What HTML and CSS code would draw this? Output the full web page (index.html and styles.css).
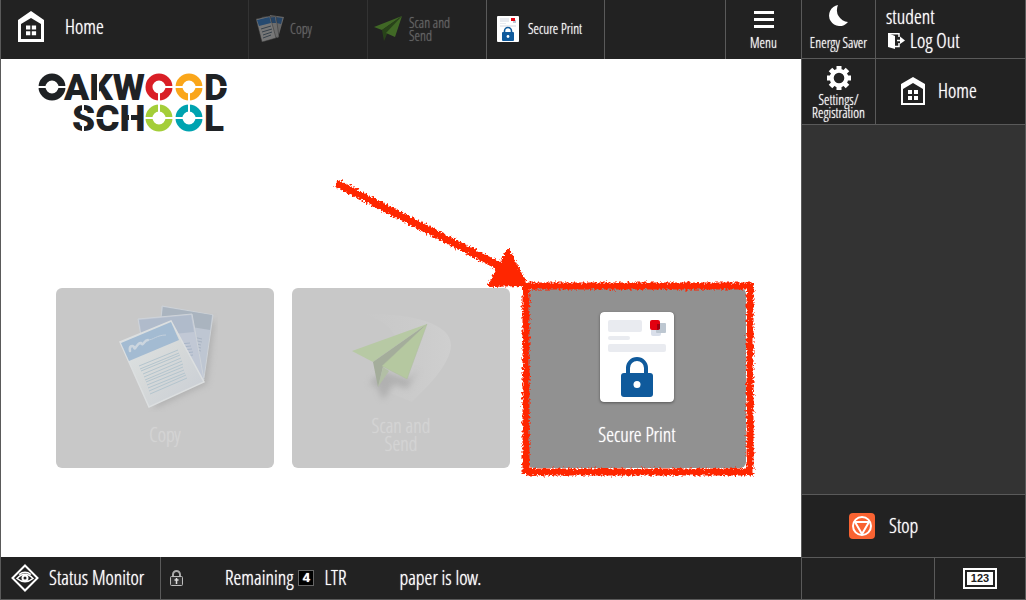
FILE: index.html
```html
<!DOCTYPE html>
<html lang="en">
<head>
    <meta charset="UTF-8">
    <meta name="viewport" content="width=device-width, initial-scale=1.0">
    <title>Home - Secure Print</title>
    <link rel="stylesheet" href="styles.css">
</head>
<body>
    <svg class="defs" width="0" height="0" aria-hidden="true">
        <symbol id="icon-home" viewBox="0 0 26 31">
            <path fill="#fff" fill-rule="evenodd" d="M13 0L26 9V31H0V9ZM13 7L3 13V28H23V13Z"/>
            <path fill="#fff" d="M8 14.500h4.300v4H8zM13.800 14.500h4.300v4h-4.300zM8 20.200h4.300v4H8zM13.800 20.200h4.300v4h-4.300z"/>
        </symbol>
    </svg>

    <div class="panel">
        <div class="screen">
            <header class="topbar">
                <button class="tab tab-home" type="button">
                    <svg width="26" height="31"><use href="#icon-home"/></svg>
                    <span>Home</span>
                </button>
                <button class="tab tab-copy" type="button" disabled>
                    <svg width="28" height="27" viewBox="0 0 28 27">
                        <path fill="#aaa" d="M14 0L28 2L22 23L12 20Z"/>
                        <path fill="#2a66a8" d="M16 1.500L26.500 3L25 9L16 7Z"/>
                        <path fill="#b8b8b8" stroke="#444" stroke-width=".5" d="M6 2L20 1L23 22L10 24Z"/>
                        <path fill="#2a66a8" d="M8 3L19 2L20 8L9 8Z"/>
                        <path fill="#ccc" stroke="#444" stroke-width=".5" d="M0 4L14 1L20 23L6 27Z"/>
                        <path fill="#2a72bd" d="M1 5L13.500 2L15 8L3 11Z"/>
                        <path stroke="#4b6175" d="M5 14l10-3M6 17l10-3M7 20l9-3M7 23l8-3"/>
                    </svg>
                    <span>Copy</span>
                </button>
                <button class="tab tab-scan" type="button" disabled>
                    <svg width="28" height="25" viewBox="0 0 28 25">
                        <path fill="#5fae29" d="M28 0L0 11L8 14Z"/>
                        <path fill="#2f6412" d="M28 0L8 14L10 25L13 18Z"/>
                        <path fill="#60b02b" d="M28 0L12 17L21 21Z"/>
                    </svg>
                    <span>Scan and<br>Send</span>
                </button>
                <button class="tab tab-secure" type="button">
                    <svg width="22" height="26" viewBox="0 0 22 26">
                        <rect width="22" height="26" rx="1" fill="#fff"/>
                        <path fill="#e9ebf0" d="M3 2h9v4H3zM3 7h6v1H3zM3 9h16v2H3z"/>
                        <path fill="#bcc5d2" d="M16 4h3v3h-3z"/>
                        <path fill="#e2000f" d="M14 2h4v3h-4z"/>
                        <path fill="none" stroke="#0f5a9c" stroke-width="1.600" d="M7.500 17v-2a3.500 3.500 0 0 1 7 0v2"/>
                        <rect x="5" y="16" width="12" height="9" rx="1" fill="#0f5a9c"/>
                        <circle cx="11" cy="20.500" r="1.400" fill="#fff"/>
                    </svg>
                    <span>Secure Print</span>
                </button>
                <div class="tab-space"></div>
                <button class="tab-menu" type="button">
                    <svg width="20" height="17" viewBox="0 0 20 17"><path fill="#fff" d="M0 0h20v3H0zM0 7h20v3H0zM0 14h20v3H0z"/></svg>
                    <span>Menu</span>
                </button>
            </header>

            <main class="content">
                <svg class="logo" width="192" height="58" viewBox="0 0 192 58" role="img" aria-label="Oakwood School">
                    <g class="logo-text">
                        <text y="27" x="26">AKW</text>
                        <text y="27" x="166">D</text>
                        <text y="58" x="34">SCH</text>
                        <text y="58" x="166">L</text>
                    </g>
                    <g fill="none" stroke-width="7">
                        <circle cx="14" cy="14" r="10" stroke="#1f2225"/>
                        <circle cx="121" cy="14" r="10" stroke="#d91f26"/>
                        <circle cx="151" cy="14" r="10" stroke="#faa61a"/>
                        <circle cx="121" cy="45" r="10" stroke="#a4ce39"/>
                        <circle cx="151" cy="45" r="10" stroke="#00a3b0"/>
                    </g>
                    <path class="logo-cuts" d="M0 14H8M20 14H28M127 14H135M121 20V39M137 14H145M157 14H165M151 20V39M107 45H115M127 45H135M137 45H145M157 45H165M180 14H192M56 45H66M45 30V38M45 51V59M92 40V50M60 0V28"/>
                </svg>

                <div class="tiles">
                    <button class="tile tile-off" type="button" disabled>
                        <span class="tile-icon">
                            <svg width="105" height="110" viewBox="0 0 105 110">
                                <defs>
                                    <linearGradient id="paper" x1="0" y1="0" x2="1" y2="1">
                                        <stop offset="0" stop-color="#dfe5e6"/>
                                        <stop offset=".5" stop-color="#d6d9d9"/>
                                        <stop offset="1" stop-color="#c8cdd5"/>
                                    </linearGradient>
                                    <filter id="soft" x="-20%" y="-20%" width="140%" height="140%"><feGaussianBlur stdDeviation="3"/></filter>
                                </defs>
                                <path fill="#999" opacity=".5" filter="url(#soft)" d="M102 16L94 82L40 107L60 60Z"/>
                                <path fill="#bec6d2" stroke="#cdd2d7" d="M49 4L100 13L91 76L45 60Z"/>
                                <path fill="#aab4bf" d="M50 5L99 13L97 28L48 20Z"/>
                                <path stroke="#a8b3c2" d="M80 35l9 2M80 38l9 2M80 41l8 2M80 44l8 2M80 47l8 2M80 50l7 2"/>
                                <path fill="#c1c8d5" stroke="#ced3d9" d="M25 17L79 12L91 78L36 80Z"/>
                                <path fill="#b0bbcb" d="M26 18L78 13L81 30L29 35Z"/>
                                <path stroke="#a8b5c7" d="M67 42l10-1M69 45l9-1M70 48l9-1M72 51l8-1M73 54l7-1"/>
                                <path fill="url(#paper)" stroke="#dcdfe0" stroke-width="1.500" d="M7 40L58 19L91 80L36 105Z"/>
                                <path fill="#a3bbd2" d="M8 41L58 20L66 38L16 59Z"/>
                                <path fill="none" stroke="#ccd6df" stroke-width="2.500" stroke-linecap="round" d="M17 49C16 44 19 43 21 45C22 50 24 40 28 41C30 45 31 38 35 38"/>
                                <path fill="none" stroke="#c3d0dc" d="M35 38C40 38 44 33 53 33"/>
                                <path stroke="#b4c5ce" d="M26 64L65 48M27 67L66 51M28 69L67 53M30 72L68 56M31 75L69 59M32 78L70 62M33 80L70 65M34 83L71 68M35 86L72 71M36 89L73 73M37 92L74 76"/>
                            </svg>
                        </span>
                        <span class="tile-label">Copy</span>
                    </button>
                    <button class="tile tile-off" type="button" disabled>
                        <span class="tile-icon">
                            <svg width="108" height="100" viewBox="0 0 108 100">
                                <defs>
                                    <linearGradient id="envelope">
                                        <stop offset="0" stop-color="#c8c8c8"/>
                                        <stop offset=".6" stop-color="#cbcbcb"/>
                                        <stop offset="1" stop-color="#cfcfcf"/>
                                    </linearGradient>
                                </defs>
                                <path fill="url(#envelope)" d="M17 7C60 6 104 15 104 38C104 58 76 84 65 95L14 74L50 34C46 22 38 14 17 7Z"/>
                                <path fill="#999" opacity=".5" filter="url(#soft)" d="M72 62L60 82L47 77L36 93L30 80L22 76L36 64L62 72Z"/>
                                <path fill="#b7c9a4" d="M80 17L5 44L26 55Z"/>
                                <path fill="#a4ad9b" d="M80 17L26 55L31 80L36 60Z"/>
                                <path fill="#b2bfa5" d="M36 60L31 80L42 64Z"/>
                                <path fill="#b5c8a0" stroke="#aebd9e" stroke-width=".500" d="M80 17L35 59L60 72Z"/>
                            </svg>
                        </span>
                        <span class="tile-label">Scan and<br>Send</span>
                    </button>
                    <div class="tile-wrap">
                        <button class="tile" type="button">
                            <span class="tile-icon">
                                <svg class="sheet" width="74" height="90" viewBox="0 0 74 90">
                                    <rect width="74" height="90" rx="4" fill="#fff"/>
                                    <g fill="#e9ebf0">
                                        <rect x="8" y="8" width="34" height="12" rx="2"/>
                                        <rect x="8" y="24" width="22" height="4" rx="2"/>
                                        <rect x="8" y="32" width="58" height="8" rx="2"/>
                                    </g>
                                    <rect x="51" y="14" width="10" height="10" rx="2" fill="#d9dfea"/>
                                    <rect x="56" y="11" width="10" height="10" rx="1" fill="#bdc7d1"/>
                                    <rect x="50" y="8" width="10" height="10" rx="2" fill="#e2000f"/>
                                    <path fill="#a00010" d="M57 12h3v5l-3 1z"/>
                                    <path fill="none" stroke="#0f5a9c" stroke-width="4" d="M28 62V56a9 9 0 0 1 18 0v6"/>
                                    <rect x="21" y="61" width="32" height="24" rx="3" fill="#0f5a9c"/>
                                    <circle cx="37" cy="72.500" r="3.500" fill="#fff"/>
                                </svg>
                            </span>
                            <span class="tile-label">Secure Print</span>
                        </button>
                        <!-- crayon arrow and frame around the Secure Print tile -->
                        <svg class="marker" width="430" height="312" viewBox="0 0 430 312" aria-hidden="true">
                            <filter id="crayon" filterUnits="userSpaceOnUse" x="0" y="0" width="430" height="312">
                                <feTurbulence type="fractalNoise" baseFrequency=".45" numOctaves="2" seed="4" result="noise"/>
                                <feDisplacementMap in="SourceGraphic" in2="noise" scale="6" xChannelSelector="R" yChannelSelector="G"/>
                            </filter>
                            <g filter="url(#crayon)" fill="none" stroke="#ff2600">
                                <path stroke-width="8" d="M8 15L175 100"/>
                                <path fill="#ff2600" stroke-width="4" stroke-linejoin="round" d="M180 83L197 116L162 117Z"/>
                                <path stroke-width="7" d="M195 118H425M422 116V307M425 304H198M198 306V116"/>
                            </g>
                        </svg>
                    </div>
                </div>
            </main>

            <footer class="statusbar">
                <button class="status-btn" type="button">
                    <svg width="28" height="28" viewBox="0 0 28 28" fill="none" stroke="#fff">
                        <path stroke-width="2" d="M14 1.500L26.500 14L14 26.500L1.500 14Z"/>
                        <path stroke-width="1.500" d="M6 14.500Q14 6 22 14.500Q14 21 6 14.500ZM8 10.500Q14 6 20 10.500"/>
                        <circle cx="14" cy="14" r="2.500" stroke-width="2"/>
                    </svg>
                    <span>Status Monitor</span>
                </button>
                <svg class="lock" width="13" height="16" viewBox="0 0 13 16">
                    <path fill="none" stroke="#aaa" stroke-width="2" d="M3 7V4.500a3.500 3.500 0 0 1 7 0V7"/>
                    <rect x=".500" y="6.500" width="12" height="9" rx="1" fill="#333" stroke="#bbb"/>
                    <path fill="none" stroke="#ddd" stroke-width="1.500" d="M6.500 8V14M4.500 10h4"/>
                </svg>
                <p class="message">Remaining <span class="tray">4</span> <span class="size">LTR</span> <span class="low">paper is low.</span></p>
            </footer>
        </div>

        <aside class="side">
            <div class="side-row">
                <button class="side-small energy" type="button">
                    <svg width="20" height="22" viewBox="0 0 20 22"><path fill="#fff" d="M9 0A12 12 0 0 0 19 17A10.600 10.600 0 1 1 9 0Z"/></svg>
                    <span>Energy Saver</span>
                </button>
                <div class="user">
                    <span>student</span>
                    <button class="logout" type="button">
                        <svg width="17" height="16" viewBox="0 0 17 16">
                            <path fill="#fff" d="M0 0L7 3V16L0 14Z"/>
                            <path fill="none" stroke="#fff" stroke-width="1.500" d="M0 .800H11V4M11 10V13.500H7M9 7.500H14"/>
                            <path fill="#fff" d="M12 3.500L17 7.500L12 11Z"/>
                        </svg>
                        <span>Log Out</span>
                    </button>
                </div>
            </div>
            <div class="side-row side-row-tall">
                <button class="side-small settings" type="button">
                    <svg width="24" height="24" viewBox="0 0 24 24" fill="none" stroke="#fff">
                        <circle cx="12" cy="12" r="7.300" stroke-width="4"/>
                        <path stroke-width="5" d="M12 0V4M12 20V24M0 12H4M20 12H24M3.500 3.500L6.500 6.500M17.500 17.500L20.500 20.500M20.500 3.500L17.500 6.500M6.500 17.500L3.500 20.500"/>
                    </svg>
                    <span>Settings/<br>Registration</span>
                </button>
                <button class="side-home" type="button">
                    <svg width="24" height="28" viewBox="0 0 24 28">
                        <path fill="#fff" fill-rule="evenodd" d="M12 0L24 7V28H0V7ZM12 6L2 12V26H22V12Z"/>
                        <path fill="#fff" d="M7 13h4v4H7zM13 13h4v4h-4zM7 19h4v4H7zM13 19h4v4h-4z"/>
                    </svg>
                    <span>Home</span>
                </button>
            </div>
            <div class="side-blank"></div>
            <button class="stop" type="button">
                <svg width="26" height="26" viewBox="0 0 26 26">
                    <rect width="26" height="26" rx="4" fill="#f96332"/>
                    <g fill="none" stroke="#fff" stroke-width="2">
                        <circle cx="13" cy="13" r="9"/>
                        <path stroke-linejoin="round" d="M6 9H20L13 21Z"/>
                    </g>
                </svg>
                <span>Stop</span>
            </button>
            <div class="side-bottom">
                <div class="side-bottom-space"></div>
                <button class="counter" type="button"><span class="counter-label">123</span></button>
            </div>
        </aside>
    </div>
</body>
</html>
```

FILE: styles.css
```css
* {
    box-sizing: border-box;
}
body {
    margin: 0;
    font-family: "Open Sans Condensed Light", "Roboto Condensed", "Liberation Sans", sans-serif;
    font-size: 20px;
    line-height: 24px;
    color: #fff;
    background-color: #222;
    text-shadow: 0 0 1px currentColor;
}
button {
    margin: 0;
    padding: 0;
    border: none;
    background-color: #222;
    color: #fff;
    font: inherit;
    text-shadow: inherit;
    cursor: pointer;
}
button:disabled {
    cursor: default;
}
svg {
    display: block;
    flex: none;
}
.defs {
    position: absolute;
}
.panel {
    display: grid;
    grid-template-columns: 1fr 224px;
    min-height: 100vh;
    border: 1px solid #5a5a5a;
    border-top: none;
}
.screen {
    display: flex;
    flex-direction: column;
    min-width: 0;
}

/* top bar */
.topbar {
    display: flex;
    height: 59px;
    background-color: #222;
}
.tab {
    display: flex;
    align-items: center;
    width: 119px;
    padding-bottom: 2px;
    border-left: 1px solid #333;
    font-size: 14px;
    line-height: 13px;
    text-align: left;
}
.tab-home {
    width: 247px;
    padding: 0 0 6px 17px;
    gap: 21px;
    border-left: none;
    font-size: 20px;
}
.tab-copy {
    padding-left: 7px;
    gap: 6px;
}
.tab-scan {
    padding-left: 6px;
    gap: 7px;
}
.tab:disabled {
    color: #666;
}
.tab:disabled svg {
    opacity: 0.5;
}
.tab-secure {
    width: 118px;
    padding-left: 10px;
    gap: 9px;
    border-color: #5a5a5a;
}
.tab-space {
    flex: 1;
    border-left: 1px solid #5a5a5a;
}
.tab-menu {
    display: flex;
    flex-direction: column;
    align-items: center;
    width: 76px;
    padding-top: 11px;
    gap: 8px;
    border-left: 1px solid #5a5a5a;
    font-size: 14px;
    line-height: 14px;
}

/* main area */
.content {
    flex: 1;
    display: flex;
    flex-direction: column;
    justify-content: space-between;
    padding: 14px 20px 89px;
    background-color: #fff;
}
.logo {
    margin-left: 17px;
    overflow: visible;
}
.logo-text {
    font-family: Roboto, sans-serif;
    font-size: 37px;
    font-weight: 900;
    fill: #1f2225;
    text-shadow: none;
}
.logo-cuts {
    stroke: #fff;
    stroke-width: 2;
}
.tiles {
    display: flex;
    justify-content: center;
    gap: 18px;
}
.tile {
    display: flex;
    flex-direction: column;
    align-items: center;
    width: 218px;
    height: 180px;
    padding: 9px 0 15px;
    border-radius: 6px;
    background-color: #919191;
    line-height: 18px;
}
.tile-off {
    background-color: #c8c8c8;
    color: #d4d4d4;
}
.tile-icon {
    display: flex;
    flex: 1;
    align-items: center;
}
.tile-label {
    display: flex;
    align-items: center;
    height: 36px;
}
.tile-wrap {
    position: relative;
}
.sheet {
    border-radius: 4px;
    box-shadow: 0 1px 3px rgba(0, 0, 0, 0.4);
}
.marker {
    position: absolute;
    left: -200px;
    top: -120px;
    pointer-events: none;
}

/* status bar */
.statusbar {
    display: flex;
    align-items: center;
    height: 42px;
    background-color: #222;
}
.status-btn {
    display: flex;
    align-items: center;
    align-self: stretch;
    width: 160px;
    padding-left: 10px;
    gap: 10px;
    border-right: 1px solid #5a5a5a;
}
.lock {
    margin: 0 42px 0 9px;
}
.message {
    display: flex;
    align-items: center;
    margin: 0;
}
.tray {
    width: 16px;
    height: 16px;
    margin: 0 10px 0 5px;
    border: 1px solid #666;
    background-color: #000;
    font-family: "Liberation Sans", sans-serif;
    font-size: 13px;
    font-weight: bold;
    line-height: 14px;
    text-align: center;
}
.low {
    margin-left: 53px;
}

/* right side keys */
.side {
    display: flex;
    flex-direction: column;
    border-left: 1px solid #5a5a5a;
}
.side-row {
    display: flex;
    height: 59px;
    border-bottom: 1px solid #5a5a5a;
}
.side-row-tall {
    height: 66px;
}
.side-small {
    display: flex;
    flex-direction: column;
    align-items: center;
    width: 74px;
    border-right: 1px solid #5a5a5a;
    font-size: 14px;
    line-height: 13px;
}
.energy {
    padding-top: 5px;
    gap: 9px;
}
.settings {
    padding-top: 7px;
    gap: 3px;
}
.user {
    padding: 5px 0 0 10px;
}
.logout {
    display: flex;
    align-items: center;
    padding-left: 2px;
    gap: 5px;
}
.side-home {
    display: flex;
    flex: 1;
    align-items: center;
    padding: 0 0 2px 25px;
    gap: 13px;
}
.side-blank {
    flex: 1;
    background-color: #333;
}
.stop {
    display: flex;
    align-items: center;
    height: 64px;
    padding-left: 47px;
    gap: 14px;
    border-top: 1px solid #5a5a5a;
    border-bottom: 1px solid #5a5a5a;
}
.side-bottom {
    display: flex;
    height: 41px;
}
.side-bottom-space {
    flex: 1;
}
.counter {
    display: flex;
    align-items: center;
    justify-content: center;
    width: 91px;
    border-left: 1px solid #5a5a5a;
}
.counter-label {
    padding: 2px 4px;
    border: 2px solid #222;
    outline: 2px solid #fff;
    background-color: #fff;
    color: #222;
    font-family: "Liberation Sans", sans-serif;
    font-size: 11px;
    font-weight: bold;
    line-height: 9px;
    text-shadow: none;
}
```
